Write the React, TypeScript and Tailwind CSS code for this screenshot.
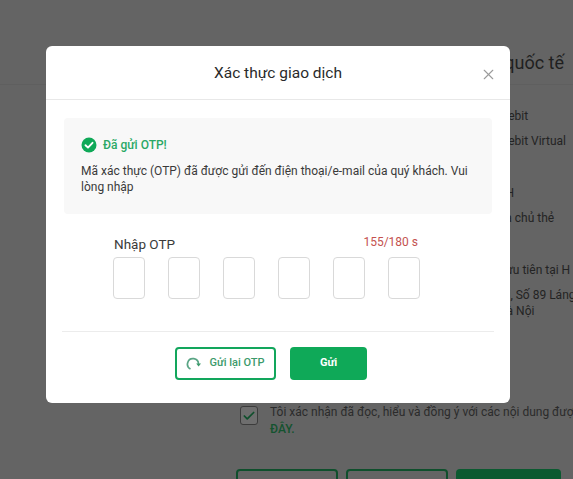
import { Check, X } from 'lucide-react'

const otpSlots = [0, 1, 2, 3, 4, 5]

function BackgroundPage() {
  return (
    <div className="h-[479px] overflow-hidden bg-[#646464] text-[12px] text-[#232323]">
      <div className="flex h-[85px] items-end border-b border-[#5f5f5f] pb-[9px] pl-[416px]">
        <span className="whitespace-nowrap text-[18px] leading-[24px] text-[#1f1f1f]">Thẻ ghi nợ quốc tế</span>
      </div>
      <div className="flex flex-col pl-[474px] pt-[23px]">
        <div className="leading-[16px] whitespace-nowrap">Visa Debit</div>
        <div className="mt-[9px] leading-[16px] whitespace-nowrap">Visa Debit Virtual</div>
        <div className="mt-[36px] leading-[16px] whitespace-nowrap">Hạng H</div>
        <div className="mt-[9px] leading-[16px] whitespace-nowrap">Nó của chủ thẻ</div>
        <div className="mt-[36px] leading-[16px] whitespace-nowrap">Hạng ưu tiên tại H</div>
        <div className="mt-[9px] leading-[16px] whitespace-nowrap">Hà Nội, Số 89 Láng</div>
        <div className="leading-[16px] whitespace-nowrap">Phố Hà Nội</div>
      </div>
      <div className="mt-[86px] flex gap-[12px] pl-[240px]">
        <div className="mt-[1px] flex h-[19px] w-[18px] shrink-0 items-center justify-center rounded-[3px] border border-[#3c3c3c] bg-[#6e6e6e]">
          <Check size={14} strokeWidth={3} className="text-[#0f4f2c]" />
        </div>
        <div className="mt-[-1px] leading-[17px] whitespace-nowrap">
          <div className="text-[#2b2b2b]">Tôi xác nhận đã đọc, hiểu và đồng ý với các nội dung được</div>
          <div className="font-medium text-[#14532f]">ĐÂY.</div>
        </div>
      </div>
      <div className="mt-[31px] flex gap-[8px] pl-[236px]">
        <div className="h-[30px] w-[102px] rounded-[4px] border-2 border-[#0f4f2c]" />
        <div className="h-[30px] w-[102px] rounded-[4px] border-2 border-[#0f4f2c]" />
        <div className="h-[30px] w-[105px] rounded-[4px] bg-[#0b5a30]" />
      </div>
    </div>
  )
}

function OtpModal() {
  return (
    <div className="absolute left-[46px] top-[46px] h-[357px] w-[464px] rounded-[6px] bg-white text-[#333]">
      <div className="relative flex h-[54px] items-center justify-center border-b border-[#e8e8e8]">
        <h2 className="text-[15.5px] font-normal leading-[20px] text-[#2a2a2a]">Xác thực giao dịch</h2>
        <button type="button" className="absolute right-[13px] top-[20px] text-[#9b9b9b]">
          <X size={17} strokeWidth={1.6} />
        </button>
      </div>

      <div className="mx-[18px] mt-[18px] h-[96px] rounded-[4px] bg-[#f8f8f8] px-[17px] pt-[19px]">
        <div className="flex items-center gap-[6px]">
          <svg width="16" height="16" viewBox="0 0 16 16" className="shrink-0">
            <circle cx="8" cy="8" r="7.5" fill="#0fa958" />
            <path d="M4.5 8.2 7 10.6 11.5 5.8" fill="none" stroke="#fff" strokeWidth="1.9" strokeLinecap="round" strokeLinejoin="round" />
          </svg>
          <span className="text-[12px] font-medium leading-[16px] text-[#2aa866]">Đã gửi OTP!</span>
        </div>
        <p className="mt-[10px] text-[12px] leading-[16px] text-[#3a3a3a]">
          Mã xác thực (OTP) đã được gửi đến điện thoại/e-mail của quý khách. Vui lòng nhập
        </p>
      </div>

      <div className="ml-[68px] mr-[92px] mt-[20px] flex items-start justify-between">
        <label className="text-[13.5px] leading-[20px] text-[#3a3a3a]">Nhập OTP</label>
        <span className="text-[12px] leading-[16px] text-[#c4524f]">155/180 s</span>
      </div>
      <div className="ml-[67px] mt-[3px] flex gap-[23px]">
        {otpSlots.map(slot => (
          <input
            key={slot}
            type="text"
            aria-label={`OTP ${slot + 1}`}
            className="h-[42px] w-[32px] rounded-[4px] border border-[#d9d9d9] bg-white"
          />
        ))}
      </div>

      <div className="mx-[16px] mt-[32px] border-t border-[#ececec]" />

      <div className="ml-[129px] mt-[15px] flex gap-[14px]">
        <button
          type="button"
          className="flex h-[33px] w-[101px] items-center justify-center gap-[7px] rounded-[4px] border-2 border-[#12a65c] text-[11px] font-medium text-[#3c9a6b]"
        >
          <svg width="16" height="15" viewBox="0 0 16 15" className="shrink-0">
            <path d="M4.5 13 A5.5 5.5 0 1 1 12.5 8" fill="none" stroke="#5aa585" strokeWidth="1.7" />
            <path d="M10.2 7.4 H15 L12.6 10.6 Z" fill="#3c9a6b" />
          </svg>
          Gửi lại OTP
        </button>
        <button
          type="button"
          className="h-[33px] w-[77px] rounded-[4px] bg-[#0fa958] text-[11px] font-bold text-white"
        >
          Gửi
        </button>
      </div>
    </div>
  )
}

export default function App() {
  return (
    <div className="relative h-[479px] w-[573px] overflow-hidden font-['Roboto',sans-serif]">
      <BackgroundPage />
      <OtpModal />
    </div>
  )
}
